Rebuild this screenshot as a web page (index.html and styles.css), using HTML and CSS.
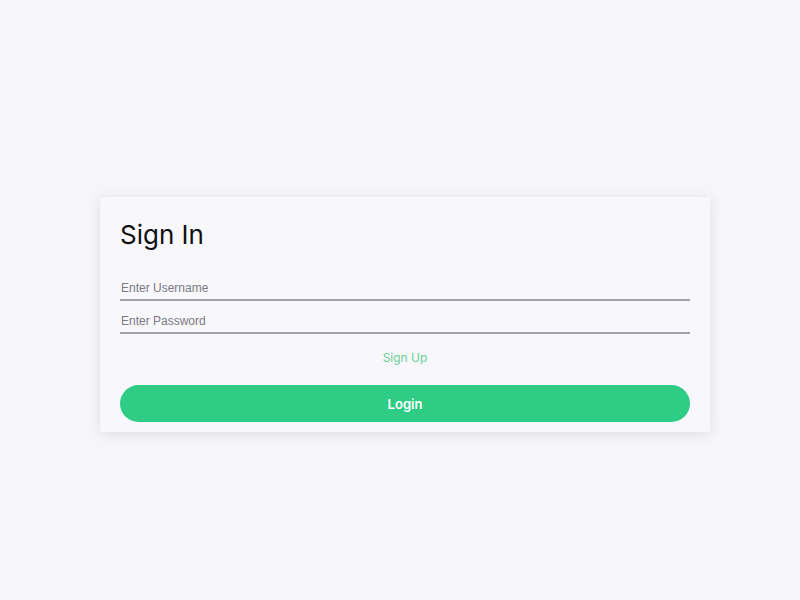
FILE: index.html
```html
<!DOCTYPE html>
<html>
<head>
<meta charset="utf-8">
<link rel="stylesheet" href="styles.css">
</head>
<body>
<div class="page">
  <form class="card">
    <h1 class="title">Sign In</h1>
    <input class="field" type="text" placeholder="Enter Username">
    <input class="field" type="password" placeholder="Enter Password">
    <a class="signup" href="#">Sign Up</a>
    <button class="login" type="button">Login</button>
  </form>
</div>
</body>
</html>
```
FILE: styles.css
```css
html, body {
  margin: 0;
  padding: 0;
  background: #f5f5fa;
}
.page {
  min-height: 600px;
  box-sizing: border-box;
  display: flex;
  align-items: center;
  justify-content: center;
  padding: 29px 0 0 10px;
}
.card {
  width: 610px;
  box-sizing: border-box;
  padding: 18px 20px 10px;
  background: #f7f7fc;
  box-shadow: 0 2px 12px rgba(0, 0, 0, 0.10);
  display: flex;
  flex-direction: column;
}
.title {
  margin: 0 0 22px;
  font-family: Inter, "Open Sans", sans-serif;
  font-weight: 400;
  font-size: 26px;
  line-height: 40px;
  color: #111;
}
.field {
  display: block;
  width: 100%;
  box-sizing: border-box;
  height: 24px;
  margin: 0 0 9px;
  padding: 0 1px;
  border: none;
  border-bottom: 2px solid #a3a2aa;
  background: transparent;
  font-family: "Liberation Sans", Arial, sans-serif;
  font-size: 12px;
  color: #333;
  outline: none;
}
.field::placeholder {
  color: #7a7a80;
}
.signup {
  align-self: center;
  margin: 6px 0 18px;
  font-family: Inter, "Open Sans", sans-serif;
  font-size: 12px;
  line-height: 18px;
  color: #6ccf95;
  text-decoration: none;
}
.login {
  height: 37px;
  border: none;
  border-radius: 19px;
  background: #2ecc84;
  color: #fff;
  font-family: Inter, "Open Sans", sans-serif;
  font-weight: 600;
  font-size: 13px;
}
```
